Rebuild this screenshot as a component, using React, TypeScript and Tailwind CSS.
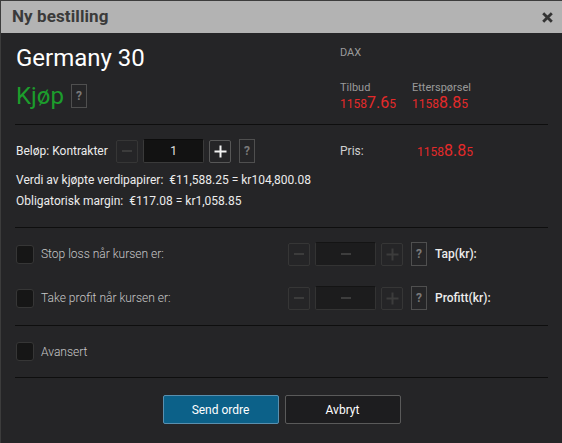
import React from "react";

const font = { fontFamily: "Roboto, 'Liberation Sans', sans-serif" };

function Price({ a, b, c }: { a: string; b: string; c: string }) {
  return (
    <span className="text-[#e42a2a] leading-none whitespace-nowrap">
      <span className="text-[12px]">{a}</span>
      <span className="text-[16px]">{b}</span>
      <span className="text-[12px]">{c}</span>
    </span>
  );
}

function Q() {
  return (
    <div className="w-[16px] h-[24px] border border-[#4f4f4f] flex items-center justify-center text-[12px] font-bold text-[#7a7a7a]">
      ?
    </div>
  );
}

function Box({ children, active }: { children: React.ReactNode; active?: boolean }) {
  return (
    <div
      className={
        "w-[22px] h-[23px] border rounded-[2px] flex items-center justify-center " +
        (active ? "border-[#575757] text-white" : "border-[#363636] text-[#454545]")
      }
    >
      {children}
    </div>
  );
}

function MinusIcon({ c }: { c: string }) {
  return (
    <svg width="12" height="12" viewBox="0 0 12 12">
      <path d="M1 6h10" stroke={c} strokeWidth="2" />
    </svg>
  );
}
function PlusIcon({ c }: { c: string }) {
  return (
    <svg width="13" height="13" viewBox="0 0 13 13">
      <path d="M0.5 6.5h12M6.5 0.5v12" stroke={c} strokeWidth="2" />
    </svg>
  );
}

function Check() {
  return <div className="w-[18px] h-[19px] bg-[#161616] border border-[#363636] rounded-[3px] shrink-0" />;
}

function Line() {
  return <div className="h-px bg-[#0e0e0e] mx-[14px]" />;
}

function RiskRow({ label, right }: { label: string; right: string }) {
  return (
    <div className="flex items-center h-[24px] pl-[15px]">
      <Check />
      <span className="ml-[7px] w-[247px] text-[12px] text-[#c9c9c9] font-light">{label}</span>
      <Box>
        <MinusIcon c="#3c3c3c" />
      </Box>
      <div className="ml-[5px] w-[61px] h-[24px] bg-[#1c1c1d] border border-[#333] border-t-[#141414] rounded-[2px] flex items-center justify-center">
        <MinusIcon c="#3d3d3d" />
      </div>
      <div className="ml-[5px]">
        <Box>
          <PlusIcon c="#3c3c3c" />
        </Box>
      </div>
      <div className="ml-[8px]">
        <Q />
      </div>
      <span className="ml-[8px] text-[12px] text-[#ececec] font-medium">{right}</span>
    </div>
  );
}

export default function App() {
  return (
    <div style={font} className="w-[562px] h-[443px] overflow-hidden bg-[#252527] border-l border-t border-[#3c3c3c]">
      <div className="h-[32px] bg-[#b3b3b3] flex items-center justify-between pl-[11px] pr-[9px]">
        <span className="text-[17px] font-bold text-[#3a3a3a] tracking-[0.1px]">Ny bestilling</span>
        <svg width="11" height="11" viewBox="0 0 11 11">
          <path d="M1.2 1.2l8.6 8.6M9.8 1.2l-8.6 8.6" stroke="#333" strokeWidth="2.8" />
        </svg>
      </div>

      <div className="grid grid-cols-[324px_1fr] px-[15px] h-[91px]">
        <div>
          <div className="mt-[11px] text-[24px] leading-[28px] text-white">Germany 30</div>
          <div className="mt-[10px] flex items-center gap-[7px]">
            <span className="text-[24px] leading-[28px] text-[#1c9d2c]">Kjøp</span>
            <Q />
          </div>
        </div>
        <div>
          <div className="mt-[14px] text-[11px] leading-[12px] text-[#9a9a9a]">DAX</div>
          <div className="mt-[22px] flex">
            <div className="w-[72px]">
              <div className="text-[11px] leading-[14px] text-[#9a9a9a]">Tilbud</div>
              <div className="leading-[14px]">
                <Price a="1158" b="7.6" c="5" />
              </div>
            </div>
            <div>
              <div className="text-[11px] leading-[14px] text-[#9a9a9a]">Etterspørsel</div>
              <div className="leading-[14px]">
                <Price a="1158" b="8.8" c="5" />
              </div>
            </div>
          </div>
        </div>
      </div>

      <Line />

      <div className="px-[15px] pt-[14px] h-[102px]">
        <div className="grid grid-cols-[324px_1fr] items-center h-[23px]">
          <div className="flex items-center">
            <span className="w-[100px] text-[12px] text-[#ececec]">Beløp: Kontrakter</span>
            <Box>
              <MinusIcon c="#3c3c3c" />
            </Box>
            <div className="ml-[5px] w-[61px] h-[24px] bg-[#121212] border border-[#3a3a3a] border-t-[#0c0c0c] rounded-[2px] flex items-center justify-center text-[12px] text-[#e0e0e0]">
              1
            </div>
            <div className="ml-[5px]">
              <Box active>
                <PlusIcon c="#f2f2f2" />
              </Box>
            </div>
            <div className="ml-[8px]">
              <Q />
            </div>
          </div>
          <div className="flex items-center">
            <span className="w-[77px] text-[12px] text-[#d0d0d0]">Pris:</span>
            <Price a="1158" b="8.8" c="5" />
          </div>
        </div>
        <div className="mt-[8px] text-[12px] leading-[21px] text-[#ececec]">
          <div>
            Verdi av kjøpte verdipapirer:&nbsp;&nbsp;€11,588.25 = kr104,800.08
          </div>
          <div>Obligatorisk margin:&nbsp;&nbsp;€117.08 = kr1,058.85</div>
        </div>
      </div>

      <Line />

      <div className="pt-[14px] h-[97px]">
        <RiskRow label="Stop loss når kursen er:" right="Tap(kr):" />
        <div className="mt-[20px]">
          <RiskRow label="Take profit når kursen er:" right="Profitt(kr):" />
        </div>
      </div>

      <Line />

      <div className="h-[51px] flex items-center pl-[15px]">
        <Check />
        <span className="ml-[7px] text-[12px] text-[#c9c9c9] font-light">Avansert</span>
      </div>

      <Line />

      <div className="flex justify-center gap-[6px] pt-[17px]">
        <button className="w-[116px] h-[29px] bg-[#0c6189] border border-[#5a8fae] rounded-[2px] text-[12px] text-white">
          Send ordre
        </button>
        <button className="w-[116px] h-[29px] bg-[#1d1d1f] border border-[#5a5a5a] rounded-[2px] text-[12px] text-white">
          Avbryt
        </button>
      </div>
    </div>
  );
}
